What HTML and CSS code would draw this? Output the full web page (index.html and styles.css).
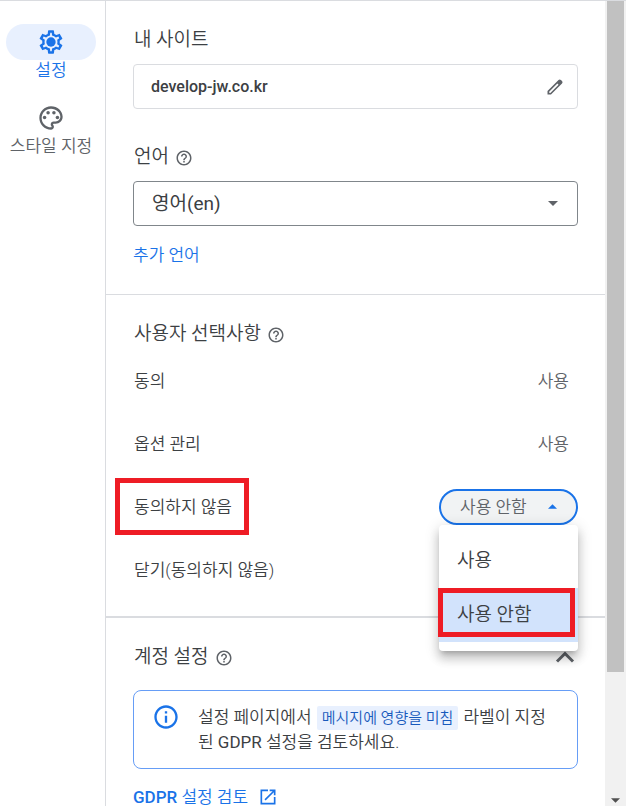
FILE: index.html
```html
<!DOCTYPE html>
<html lang="ko">
<head>
    <meta charset="UTF-8">
    <meta name="viewport" content="width=device-width, initial-scale=1.0">
    <title>메시지 설정</title>
    <link rel="stylesheet" href="styles.css">
</head>
<body>
    <svg class="sprite" aria-hidden="true">
        <symbol id="icon-help" viewBox="0 0 24 24">
            <path d="M11 18h2v-2h-2v2zm1-16C6.48 2 2 6.48 2 12s4.480 10 10 10 10-4.480 10-10S17.520 2 12 2zm0 18c-4.410 0-8-3.590-8-8s3.590-8 8-8 8 3.590 8 8-3.590 8-8 8zm0-14c-2.210 0-4 1.790-4 4h2c0-1.100.9-2 2-2s2 .9 2 2c0 2-3 1.750-3 5h2c0-2.250 3-2.500 3-5 0-2.210-1.790-4-4-4z"/>
        </symbol>
    </svg>

    <nav class="sidebar">
        <a href="#settings" class="nav-item active">
            <span class="nav-icon">
                <svg viewBox="0 0 24 24" width="28" height="28">
                    <path d="M19.430 12.980c.04-.32.07-.64.07-.98s-.03-.66-.07-.98l2.110-1.650c.19-.15.24-.42.12-.64l-2-3.460c-.12-.22-.39-.3-.61-.22l-2.490 1c-.52-.4-1.080-.73-1.690-.98l-.38-2.650C14.460 2.180 14.250 2 14 2h-4c-.25 0-.46.18-.49.42l-.38 2.650c-.61.25-1.170.59-1.690.98l-2.490-1c-.23-.09-.49 0-.61.22l-2 3.460c-.13.22-.07.49.12.64l2.110 1.650c-.04.32-.07.65-.07.98s.03.66.07.98l-2.110 1.650c-.19.15-.24.42-.12.64l2 3.460c.12.22.39.3.61.22l2.490-1c.52.4 1.080.73 1.690.98l.38 2.650c.03.24.24.42.49.42h4c.25 0 .46-.18.49-.42l.38-2.650c.61-.25 1.170-.59 1.690-.98l2.490 1c.23.09.49 0 .61-.22l2-3.460c.12-.22.07-.49-.12-.64zM17.450 11.270c.07.5.07.96 0 1.460l-.14 1.130 1.790 1.400-.78 1.350-2.110-.85-.98.76c-.4.3-.8.53-1.250.72l-1.060.43-.32 2.330h-1.200l-.32-2.330-1.060-.43c-.44-.18-.84-.41-1.230-.71l-.98-.77-2.130.86-.78-1.350 1.790-1.400-.14-1.130a5.500 5.500 0 0 1 0-1.480l.14-1.130L4.900 8.740l.78-1.350 2.110.85.98-.76c.4-.3.8-.53 1.250-.72l1.060-.43L11.400 4h1.200l.32 2.330 1.060.43c.44.18.84.41 1.230.71l.98.77 2.130-.86.78 1.350-1.790 1.410z"/>
                    <circle cx="12" cy="12" r="4"/>
                </svg>
            </span>
            <span class="nav-label">설정</span>
        </a>
        <a href="#style" class="nav-item">
            <span class="nav-icon">
                <svg viewBox="0 0 24 24" width="28" height="28">
                    <path d="M12 22C6.490 22 2 17.510 2 12S6.490 2 12 2s10 4.040 10 9c0 3.310-2.690 6-6 6h-1.770c-.28 0-.5.22-.5.5 0 .12.05.23.13.33.41.47.64 1.060.64 1.670 0 1.380-1.120 2.500-2.500 2.500zm0-18c-4.410 0-8 3.590-8 8s3.590 8 8 8c.28 0 .5-.22.5-.5 0-.16-.08-.28-.14-.35-.41-.46-.63-1.050-.63-1.650 0-1.380 1.120-2.500 2.500-2.500H16c2.210 0 4-1.790 4-4 0-3.860-3.590-7-8-7z"/>
                    <circle cx="6.500" cy="11.500" r="1.500"/>
                    <circle cx="9.500" cy="7.500" r="1.500"/>
                    <circle cx="14.500" cy="7.500" r="1.500"/>
                    <circle cx="17.500" cy="11.500" r="1.500"/>
                </svg>
            </span>
            <span class="nav-label">스타일 지정</span>
        </a>
    </nav>

    <main class="panel">
        <section class="section">
            <h2 class="title">내 사이트</h2>
            <div class="site-box">
                <span class="site-name">develop-jw.co.kr</span>
                <button type="button" class="icon-button" aria-label="수정">
                    <svg viewBox="0 0 24 24" width="20" height="20">
                        <path fill-rule="evenodd" d="M20.410 4.940l-1.350-1.350a2 2 0 0 0-2.830 0L3 16.820V21h4.180L20.410 7.770a2 2 0 0 0 0-2.830zM6.410 19.060L5 19v-1.360l9.820-9.820 1.410 1.410z"/>
                    </svg>
                </button>
            </div>

            <div class="title-row">
                <label class="title" for="language">언어</label>
                <svg class="help" width="18" height="18"><use href="#icon-help"/></svg>
            </div>
            <div class="select-box">
                <select id="language">
                    <option>영어(en)</option>
                </select>
                <svg class="caret" viewBox="0 0 10 5" width="10" height="5"><path d="M0 0h10L5 5z"/></svg>
            </div>
            <a href="#languages" class="link">추가 언어</a>
        </section>

        <section class="section choices">
            <div class="title-row">
                <h2 class="title">사용자 선택사항</h2>
                <svg class="help" width="18" height="18"><use href="#icon-help"/></svg>
            </div>
            <div class="row">
                <span>동의</span>
                <span class="value">사용</span>
            </div>
            <div class="row">
                <span>옵션 관리</span>
                <span class="value">사용</span>
            </div>
            <div class="row">
                <span class="marked" id="refuse-label">동의하지 않음</span>
                <div class="dropdown">
                    <button type="button" class="dropdown-button" aria-haspopup="listbox" aria-expanded="true" aria-describedby="refuse-label">
                        사용 안함
                        <svg viewBox="0 0 10 5" width="9" height="5"><path d="M0 5h10L5 0z"/></svg>
                    </button>
                    <div class="menu" role="listbox" aria-labelledby="refuse-label">
                        <button type="button" class="option" role="option" aria-selected="false">사용</button>
                        <button type="button" class="option selected" role="option" aria-selected="true">사용 안함</button>
                    </div>
                </div>
            </div>
            <div class="row">
                <span>닫기(동의하지 않음)</span>
            </div>
        </section>

        <section class="section">
            <div class="title-row">
                <h2 class="title">계정 설정</h2>
                <svg class="help" width="18" height="18"><use href="#icon-help"/></svg>
                <button type="button" class="icon-button collapse" aria-label="접기">
                    <svg viewBox="0 0 20 12" width="20" height="12"><path d="M2 10.500l8-8 8 8" fill="none" stroke="currentColor" stroke-width="3"/></svg>
                </button>
            </div>
            <div class="notice">
                <svg class="info" viewBox="0 0 24 24" width="28" height="28">
                    <path d="M11 7h2v2h-2zm0 4h2v6h-2zm1-9C6.480 2 2 6.480 2 12s4.480 10 10 10 10-4.480 10-10S17.520 2 12 2zm0 18c-4.410 0-8-3.590-8-8s3.590-8 8-8 8 3.590 8 8-3.590 8-8 8z"/>
                </svg>
                <p>설정 페이지에서 <span class="chip">메시지에 영향을 미침</span> 라벨이 지정된 <span class="latin">GDPR</span> 설정을 검토하세요.</p>
            </div>
            <a href="#gdpr" class="link review">
                <span><b>GDPR</b> 설정 검토</span>
                <svg viewBox="0 0 24 24" width="20" height="20">
                    <path d="M19 19H5V5h7V3H3v18h18v-9h-2zM14 3v2h3.590l-9.830 9.830 1.410 1.410L19 6.410V10h2V3z"/>
                </svg>
            </a>
        </section>
    </main>

    <div class="scrollbar" aria-hidden="true">
        <div class="thumb"></div>
        <svg viewBox="0 0 10 5" width="9" height="5"><path d="M0 0h10L5 5z"/></svg>
    </div>
</body>
</html>
```

FILE: styles.css
```css
* {
    box-sizing: border-box;
}

body {
    margin: 0;
    height: 100vh;
    display: flex;
    overflow: hidden;
    border-top: 1px solid #dadce0;
    background-color: #fff;
    color: #3c4043;
    font-family: Roboto, "Noto Sans CJK KR", sans-serif;
    font-size: 17px;
    font-weight: 350;
    line-height: 24px;
}

svg {
    display: block;
    flex: none;
    fill: currentColor;
}

button {
    font: inherit;
    color: inherit;
    border: none;
    background: none;
    padding: 0;
    cursor: pointer;
}

a {
    text-decoration: none;
}

.sprite {
    display: none;
}

/* Left navigation */
.sidebar {
    flex: none;
    width: 106px;
    padding: 23px 3px 0 0;
    border-right: 1px solid #dadce0;
    display: flex;
    flex-direction: column;
    gap: 20px;
}

.nav-item {
    display: flex;
    flex-direction: column;
    align-items: center;
    color: #5f6368;
}

.nav-icon {
    width: 90px;
    height: 36px;
    display: flex;
    align-items: center;
    justify-content: center;
    border-radius: 18px;
}

.nav-label {
    line-height: 20px;
    white-space: nowrap;
}

.active {
    color: #1a73e8;
}

.active .nav-icon {
    background-color: #e8f0fe;
}

/* Settings */
.panel {
    flex: 1;
    min-width: 0;
}

.section {
    padding: 24px 27px 27px;
    border-bottom: 1px solid #dadce0;
}

.section.choices {
    padding-bottom: 15px;
    border-bottom-width: 2px;
}

.title {
    margin: 0;
    padding-left: 1px;
    font-size: 19px;
    font-weight: 350;
    line-height: 30px;
}

.title-row {
    display: flex;
    align-items: center;
    gap: 6px;
}

.help {
    color: #5f6368;
    margin-top: 2px;
}

.site-box,
.select-box {
    height: 45px;
    margin-top: 9px;
    border: 1px solid #dadce0;
    border-radius: 4px;
    display: flex;
    align-items: center;
}

.site-box {
    justify-content: space-between;
    padding: 0 12px 0 17px;
    margin-bottom: 33px;
}

.site-name {
    font-size: 16px;
    font-weight: 500;
}

.icon-button {
    color: #5f6368;
}

.select-box {
    position: relative;
    border-color: #80868b;
}

.select-box select {
    appearance: none;
    width: 100%;
    height: 100%;
    padding: 0 40px 0 18px;
    border: none;
    background: none;
    color: inherit;
    font: inherit;
    font-size: 19px;
    font-weight: 400;
}

.caret {
    position: absolute;
    right: 19px;
    color: #5f6368;
    pointer-events: none;
}

.link {
    display: flex;
    align-items: center;
    margin-top: 17px;
    color: #1a73e8;
}

.row {
    display: flex;
    align-items: center;
    justify-content: space-between;
    height: 63px;
    padding-left: 1px;
}

.value {
    padding-right: 9px;
    color: #5f6368;
}

.dropdown {
    position: relative;
}

.dropdown-button {
    width: 139px;
    height: 36px;
    padding: 0 19px;
    display: flex;
    align-items: center;
    justify-content: space-between;
    border: 2px solid #1a73e8;
    border-radius: 18px;
    background-color: #f1f3f4;
    color: #5f6368;
}

.dropdown-button svg {
    color: #1a73e8;
}

.menu {
    position: absolute;
    z-index: 1;
    top: 100%;
    left: 0;
    right: 0;
    padding: 9px 0;
    border-radius: 4px;
    background-color: #fff;
    box-shadow: 0 5px 5px -3px rgba(0, 0, 0, 0.2), 0 8px 10px 1px rgba(0, 0, 0, 0.14), 0 3px 14px 2px rgba(0, 0, 0, 0.12);
}

.option {
    display: block;
    width: 100%;
    height: 54px;
    padding: 0 18px;
    font-size: 19px;
    text-align: left;
}

.option.selected {
    position: relative;
    background-color: #d2e3fc;
}

/* Red highlight boxes */
.marked {
    position: relative;
}

.marked::after,
.option.selected::after {
    content: "";
    position: absolute;
    border: 5px solid #ee1c25;
    pointer-events: none;
}

.marked::after {
    inset: -17px -17px -16px -19px;
}

.option.selected::after {
    inset: 0 3px 5px -1px;
}

.collapse {
    margin-left: auto;
    padding-right: 3px;
}

.notice {
    display: flex;
    gap: 18px;
    margin-top: 18px;
    padding: 14px 18px;
    border: 1px solid #669df6;
    border-radius: 8px;
}

.info {
    margin-top: -2px;
    color: #1a73e8;
}

.notice p {
    margin: 0;
}

.latin {
    font-weight: 400;
}

.chip {
    margin: 0 1px;
    padding: 3px 5px;
    border-radius: 2px;
    background-color: #e8f0fe;
    color: #185abc;
    font-size: 15px;
}

.review {
    gap: 10px;
    margin-top: 16px;
}

.review b {
    font-weight: 500;
}

/* Scrollbar */
.scrollbar {
    flex: none;
    width: 21px;
    padding: 0 2px 3px;
    display: flex;
    flex-direction: column;
    align-items: center;
    justify-content: space-between;
    background-color: #f1f1f1;
    color: #505050;
}

.thumb {
    width: 100%;
    height: 83.7%;
    background-color: #c1c1c1;
}
```
